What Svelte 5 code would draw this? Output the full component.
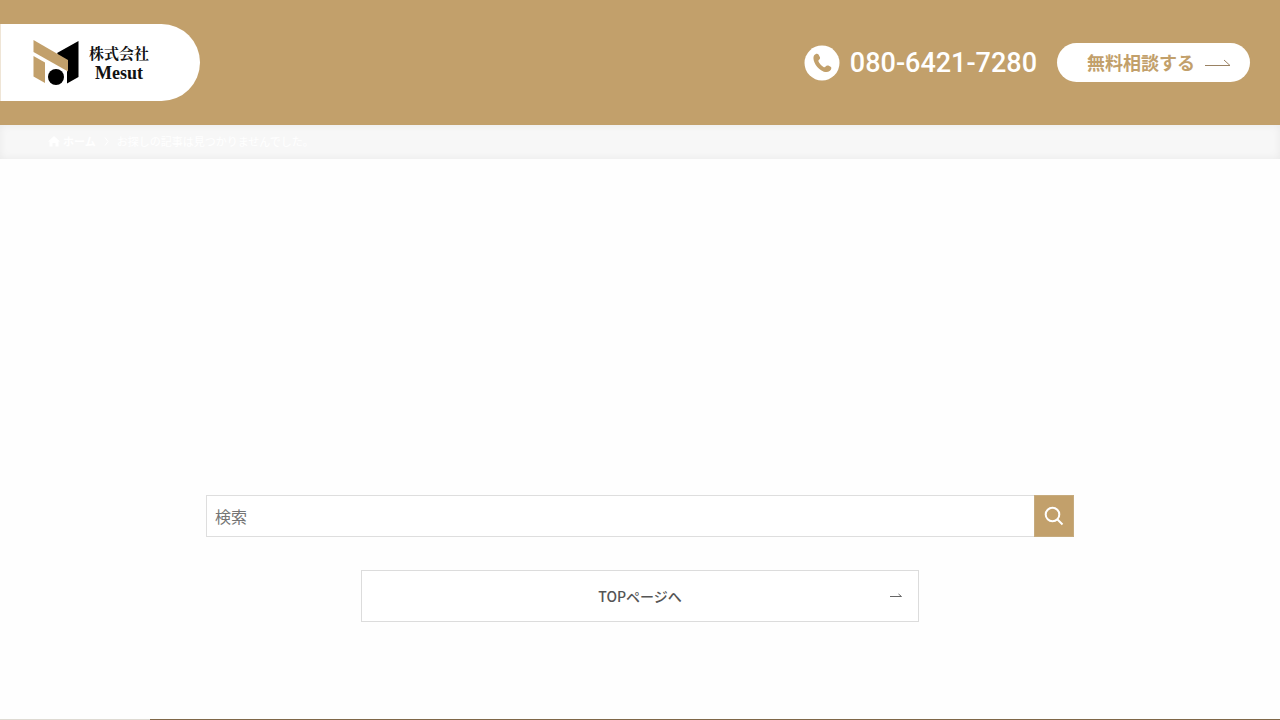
<script lang="ts">
  let query = $state("");
</script>

<svelte:head>
  <title>お探しの記事は見つかりませんでした。 | 株式会社Mesut</title>
</svelte:head>

<header class="header">
  <a class="logo" href="/">
    <svg class="logo-mark" viewBox="0 0 46 46" aria-hidden="true">
      <path d="M24 13 45.5 1v36L34 43.500V30z" fill="#000" />
      <path d="M.5 0 35 20v11.500L.5 12z" fill="#c2a06b" />
      <path d="M.5 16 12 22.500V43L.5 36.500z" fill="#c2a06b" />
      <circle cx="23" cy="37" r="9" fill="#fff" />
      <circle cx="23" cy="37" r="8" fill="#000" />
    </svg>
    <span class="logo-name">
      <span class="logo-kanji">株式会社</span>
      <span class="logo-latin">Mesut</span>
    </span>
  </a>

  <div class="contact">
    <a class="tel" href="tel:080-6421-7280">
      <svg width="36" height="36" viewBox="0 0 36 36" aria-hidden="true">
        <circle cx="18" cy="18" r="17.500" fill="#fff" />
        <path
          d="M10 10.500c1.500-2 3.500-2.500 4.500-1l1.300 2.400c.6 1.100.2 2-.8 2.800-.9.800-.7 1.600.2 3 1 1.600 2.300 3 3.900 4.100 1.200.8 1.900.7 2.500-.2.700-1 1.700-1.500 2.800-1l2.200 1.200c1.400.900.700 3-1 4.300-2 1.500-5.300 1.300-8.500-.9-2.800-2-5.200-4.500-6.500-7.500-1.200-2.700-1.600-5.400-.6-7.200z"
          fill="#c2a06b"
        />
      </svg>
      <span>080-6421-7280</span>
    </a>
    <a class="consult" href="/contact">
      <span>無料相談する</span>
      <svg width="26" height="9" viewBox="0 0 26 9" aria-hidden="true">
        <path d="M0 7.500h25L19 2" fill="none" stroke="#9a8263" />
      </svg>
    </a>
  </div>
</header>

<nav class="breadcrumb" aria-label="breadcrumb">
  <a class="home" href="/">
    <svg width="12" height="11" viewBox="0 0 12 11" aria-hidden="true">
      <path d="M6 0 12 5.500h-1.500V10.500h-3V7h-3v3.500h-3v-5H0z" fill="#fff" />
    </svg>
    <span>ホーム</span>
  </a>
  <svg class="sep" width="5" height="9" viewBox="0 0 5 9" aria-hidden="true">
    <path d="m1 .5 3 4-3 4" fill="none" stroke="#fff" />
  </svg>
  <span>お探しの記事は見つかりませんでした。</span>
</nav>

<main>
  <form class="search" role="search" onsubmit={(e) => e.preventDefault()}>
    <input type="text" name="s" placeholder="検索" aria-label="検索ワード" bind:value={query} />
    <button type="submit" aria-label="検索を実行する">
      <svg width="20" height="20" viewBox="0 0 20 20" aria-hidden="true">
        <circle cx="8.500" cy="8.500" r="6.800" fill="none" stroke="#fff" stroke-width="2" />
        <path d="m13.500 13.500 5 5" stroke="#fff" stroke-width="2" />
      </svg>
    </button>
  </form>

  <a class="top-link" href="/">
    <span>TOPページへ</span>
    <svg width="12" height="6" viewBox="0 0 12 6" aria-hidden="true">
      <path d="M0 3.500h11.500L8.500 1" fill="none" stroke="#666" />
    </svg>
  </a>
</main>

<footer class="footer">
  <div class="footer-logo"></div>
</footer>

<style>
  :global(body) {
    background: #fefefe;
    color: #333;
    font-family: "Noto Sans CJK JP", sans-serif;
  }
  a {
    color: inherit;
    text-decoration: none;
  }
  svg {
    display: block;
    flex: none;
  }
  .header {
    display: flex;
    align-items: center;
    justify-content: space-between;
    padding: 24px 30px 24px 0;
    background: #c2a06b;
  }
  .logo {
    box-sizing: border-box;
    display: flex;
    align-items: center;
    gap: 10px;
    width: 200px;
    height: 77px;
    padding-left: 32px;
    border-left: 1px solid #efe5d6;
    border-radius: 0 39px 39px 0;
    background: #fff;
  }
  .logo-mark {
    width: 46px;
    height: 46px;
  }
  .logo-name {
    display: flex;
    flex-direction: column;
    align-items: center;
    color: #111;
    font-weight: 700;
    line-height: 20px;
  }
  .logo-kanji {
    font-family: "Noto Serif CJK JP", "Noto Sans CJK JP", serif;
    font-size: 15px;
  }
  .logo-latin {
    font-family: "Liberation Serif", serif;
    font-size: 18px;
  }
  .contact {
    display: flex;
    align-items: center;
    gap: 20px;
  }
  .tel {
    display: flex;
    align-items: center;
    gap: 10px;
    color: #fff;
    font-family: Roboto, sans-serif;
    font-size: 27px;
    font-weight: 500;
    line-height: 36px;
  }
  .consult {
    box-sizing: border-box;
    display: flex;
    align-items: center;
    gap: 10px;
    height: 39px;
    padding: 0 19px 0 30px;
    border-radius: 20px;
    background: #fff;
    color: #c2a06b;
    font-size: 18px;
    font-weight: 700;
    line-height: 39px;
  }
  .breadcrumb {
    display: flex;
    align-items: center;
    padding: 7px 48px 9px;
    background: #f7f7f7;
    box-shadow: inset 0 0 8px rgba(0, 0, 0, 0.06);
    color: #fff;
    font-size: 11px;
    line-height: 18px;
  }
  .home {
    display: flex;
    align-items: center;
    gap: 3px;
    font-weight: 700;
  }
  .sep {
    margin: 0 8px;
  }
  main {
    display: flex;
    flex-direction: column;
    align-items: center;
    gap: 33px;
    padding: 336px 48px 97px;
  }
  .search {
    display: flex;
    width: 100%;
    max-width: 868px;
  }
  .search input {
    box-sizing: border-box;
    flex: 1;
    min-width: 0;
    height: 42px;
    margin: 0;
    padding: 0 8px;
    border: 1px solid #dedede;
    border-right: 0;
    border-radius: 0;
    background: #fff;
    color: #333;
    font-family: inherit;
    font-size: 16px;
  }
  .search input::placeholder {
    color: #757575;
  }
  .search button {
    display: flex;
    align-items: center;
    justify-content: center;
    box-sizing: border-box;
    width: 40px;
    height: 42px;
    padding: 0;
    border: 1px solid #c6ab7e;
    background: #c2a06b;
    cursor: pointer;
  }
  .top-link {
    box-sizing: border-box;
    display: grid;
    grid-template-columns: 1fr auto 1fr;
    align-items: center;
    width: 100%;
    max-width: 558px;
    height: 52px;
    padding: 0 16px;
    border: 1px solid #dcdcdc;
    background: #fff;
    color: #555;
    font-size: 14px;
    font-weight: 500;
  }
  .top-link span {
    grid-column: 2;
  }
  .top-link svg {
    justify-self: end;
  }
  .footer {
    background: #7f6748;
  }
  .footer-logo {
    width: 150px;
    height: 1px;
    background: #dedad2;
  }
</style>
